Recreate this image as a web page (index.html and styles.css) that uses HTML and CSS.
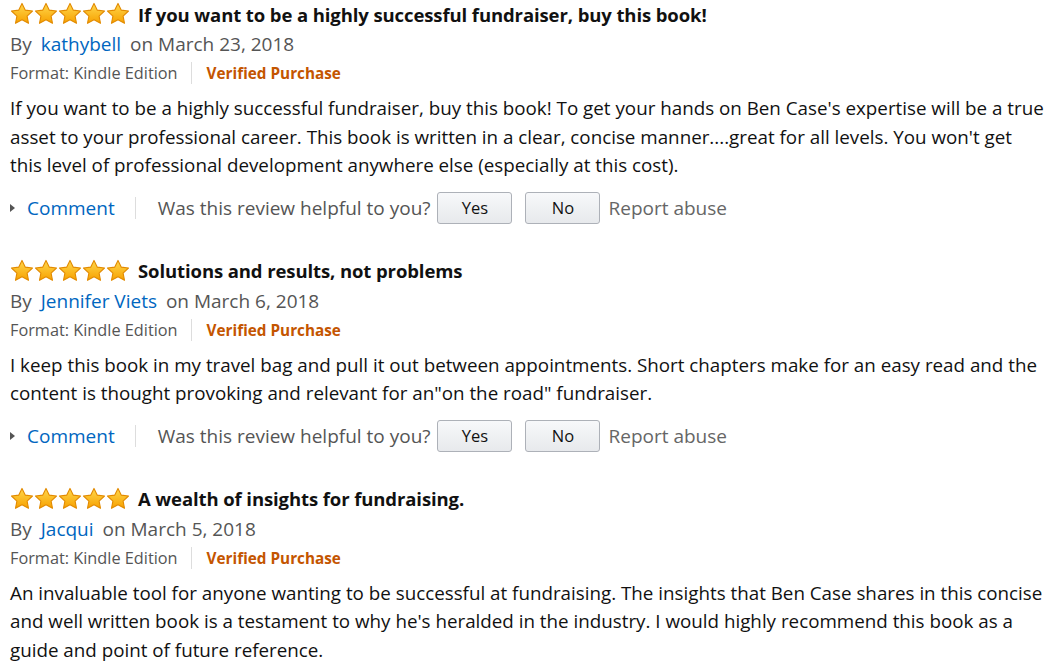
FILE: index.html
```html
<!DOCTYPE html>
<html lang="en">
<head>
  <meta charset="UTF-8" />
  <title>Customer reviews</title>
  <link rel="stylesheet" href="styles.css">
</head>
<body>
  <svg width="0" height="0" class="defs">
    <defs>
      <linearGradient id="starfill" x1="0" y1="0" x2="0" y2="1">
        <stop offset="0" stop-color="#ffd84d"/>
        <stop offset="1" stop-color="#f7a100"/>
      </linearGradient>
      <symbol id="star" viewBox="0 0 24 24">
        <path d="M12 1.4l3.2 6.7 7.3.9-5.4 5.1 1.4 7.2L12 17.8l-6.5 3.5 1.4-7.2-5.4-5.1 7.3-.9z" fill="url(#starfill)" stroke="#e28a00" stroke-width="1.1" stroke-linejoin="round"/>
      </symbol>
    </defs>
  </svg>

  <div class="review">
    <div class="review-head">
      <span class="stars"><svg><use href="#star"/></svg><svg><use href="#star"/></svg><svg><use href="#star"/></svg><svg><use href="#star"/></svg><svg><use href="#star"/></svg></span>
      <span class="title">If you want to be a highly successful fundraiser, buy this book!</span>
    </div>
    <div class="byline">By <a href="#">kathybell</a> on March 23, 2018</div>
    <div class="format"><span class="fmt">Format: Kindle Edition</span><span class="verified">Verified Purchase</span></div>
    <p class="body">If you want to be a highly successful fundraiser, buy this book! To get your hands on Ben Case's expertise will be a true asset to your professional career. This book is written in a clear, concise manner....great for all levels. You won't get this level of professional development anywhere else (especially at this cost).</p>
    <div class="actions">
      <a href="#" class="comment">Comment</a>
      <span class="helpful">Was this review helpful to you?</span>
      <button>Yes</button>
      <button>No</button>
      <span class="report">Report abuse</span>
    </div>
  </div>

  <div class="review">
    <div class="review-head">
      <span class="stars"><svg><use href="#star"/></svg><svg><use href="#star"/></svg><svg><use href="#star"/></svg><svg><use href="#star"/></svg><svg><use href="#star"/></svg></span>
      <span class="title">Solutions and results, not problems</span>
    </div>
    <div class="byline">By <a href="#">Jennifer Viets</a> on March 6, 2018</div>
    <div class="format"><span class="fmt">Format: Kindle Edition</span><span class="verified">Verified Purchase</span></div>
    <p class="body">I keep this book in my travel bag and pull it out between appointments. Short chapters make for an easy read and the content is thought provoking and relevant for an"on the road" fundraiser.</p>
    <div class="actions">
      <a href="#" class="comment">Comment</a>
      <span class="helpful">Was this review helpful to you?</span>
      <button>Yes</button>
      <button>No</button>
      <span class="report">Report abuse</span>
    </div>
  </div>

  <div class="review">
    <div class="review-head">
      <span class="stars"><svg><use href="#star"/></svg><svg><use href="#star"/></svg><svg><use href="#star"/></svg><svg><use href="#star"/></svg><svg><use href="#star"/></svg></span>
      <span class="title">A wealth of insights for fundraising.</span>
    </div>
    <div class="byline">By <a href="#">Jacqui</a> on March 5, 2018</div>
    <div class="format"><span class="fmt">Format: Kindle Edition</span><span class="verified">Verified Purchase</span></div>
    <p class="body">An invaluable tool for anyone wanting to be successful at fundraising. The insights that Ben Case shares in this concise and well written book is a testament to why he's heralded in the industry. I would highly recommend this book as a guide and point of future reference.</p>
  </div>
</body>
</html>
```

FILE: styles.css
```css
body {
  margin: 0;
  padding: 1px 16px 0 10px;
  font-family: "Open Sans", Arial, sans-serif;
  color: #111;
  background: #fff;
}
.defs {
  position: absolute;
}
a {
  color: #0066c0;
  text-decoration: none;
}
.review {
  margin-bottom: 34px;
}
.review-head {
  display: flex;
  align-items: center;
  height: 26px;
}
.stars {
  display: flex;
  margin-right: 8px;
}
.stars svg {
  width: 24px;
  height: 24px;
}
.title {
  font-weight: bold;
  font-size: 18.5px;
  letter-spacing: -0.1px;
}
.byline {
  font-size: 19px;
  color: #555;
  margin-top: 3px;
  line-height: 28px;
}
.byline a {
  margin: 0 4px;
}
.format {
  font-size: 16.3px;
  color: #555;
  line-height: 28px;
  margin-top: 1px;
  display: flex;
  align-items: center;
}
.fmt {
  padding-right: 13px;
  border-right: 1px solid #ddd;
  line-height: 22px;
}
.verified {
  color: #c45500;
  font-weight: bold;
  font-size: 15.3px;
  margin-left: 15px;
}
.body {
  margin: 7px 0 0;
  font-size: 18.8px;
  line-height: 28.5px;
}
.actions {
  display: flex;
  align-items: center;
  margin-top: 12px;
  font-size: 19px;
  color: #555;
}
.comment {
  position: relative;
  padding-left: 17px;
  padding-right: 20px;
  border-right: 1px solid #ddd;
  line-height: 22px;
}
.comment::before {
  content: "";
  position: absolute;
  left: 0;
  top: 7px;
  border-left: 5px solid #555;
  border-top: 4px solid transparent;
  border-bottom: 4px solid transparent;
}
.helpful {
  margin-left: 22px;
  margin-right: 7px;
}
button {
  width: 75px;
  height: 32px;
  font-family: inherit;
  font-size: 16.5px;
  color: #111;
  background: linear-gradient(#f7f8fa, #e7e9ec);
  border: 1px solid #adb1b8;
  border-radius: 3px;
  margin-right: 13px;
}
button + button {
  margin-right: 8px;
}
.report {
  color: #666;
}
```
